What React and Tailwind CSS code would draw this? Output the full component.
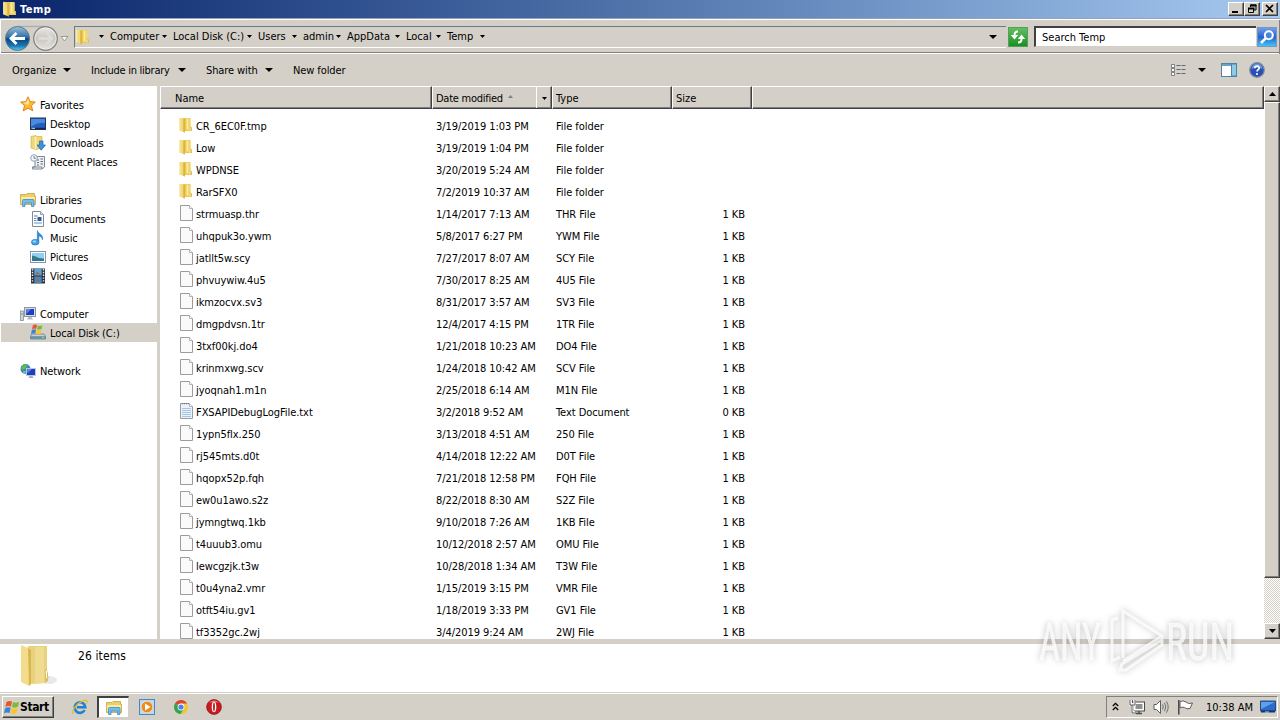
import React from 'react';

const FILES = [
  ['CR_6EC0F.tmp', '3/19/2019 1:03 PM', 'File folder', '', 'folder'],
  ['Low', '3/19/2019 1:04 PM', 'File folder', '', 'folder'],
  ['WPDNSE', '3/20/2019 5:24 AM', 'File folder', '', 'folder'],
  ['RarSFX0', '7/2/2019 10:37 AM', 'File folder', '', 'folder'],
  ['strmuasp.thr', '1/14/2017 7:13 AM', 'THR File', '1 KB', 'file'],
  ['uhqpuk3o.ywm', '5/8/2017 6:27 PM', 'YWM File', '1 KB', 'file'],
  ['jatllt5w.scy', '7/27/2017 8:07 AM', 'SCY File', '1 KB', 'file'],
  ['phvuywiw.4u5', '7/30/2017 8:25 AM', '4U5 File', '1 KB', 'file'],
  ['ikmzocvx.sv3', '8/31/2017 3:57 AM', 'SV3 File', '1 KB', 'file'],
  ['dmgpdvsn.1tr', '12/4/2017 4:15 PM', '1TR File', '1 KB', 'file'],
  ['3txf00kj.do4', '1/21/2018 10:23 AM', 'DO4 File', '1 KB', 'file'],
  ['krinmxwg.scv', '1/24/2018 10:42 AM', 'SCV File', '1 KB', 'file'],
  ['jyoqnah1.m1n', '2/25/2018 6:14 AM', 'M1N File', '1 KB', 'file'],
  ['FXSAPIDebugLogFile.txt', '3/2/2018 9:52 AM', 'Text Document', '0 KB', 'text'],
  ['1ypn5flx.250', '3/13/2018 4:51 AM', '250 File', '1 KB', 'file'],
  ['rj545mts.d0t', '4/14/2018 12:22 AM', 'D0T File', '1 KB', 'file'],
  ['hqopx52p.fqh', '7/21/2018 12:58 PM', 'FQH File', '1 KB', 'file'],
  ['ew0u1awo.s2z', '8/22/2018 8:30 AM', 'S2Z File', '1 KB', 'file'],
  ['jymngtwq.1kb', '9/10/2018 7:26 AM', '1KB File', '1 KB', 'file'],
  ['t4uuub3.omu', '10/12/2018 2:57 AM', 'OMU File', '1 KB', 'file'],
  ['lewcgzjk.t3w', '10/28/2018 1:34 AM', 'T3W File', '1 KB', 'file'],
  ['t0u4yna2.vmr', '1/15/2019 3:15 PM', 'VMR File', '1 KB', 'file'],
  ['otft54iu.gv1', '1/18/2019 3:33 PM', 'GV1 File', '1 KB', 'file'],
  ['tf3352gc.2wj', '3/4/2019 9:24 AM', '2WJ File', '1 KB', 'file'],
];

const Svg = ({ size = 16, box = '0 0 16 16', className = '', children }) => (
  <svg width={size} height={size} viewBox={box} className={`shrink-0 ${className}`}>
    {children}
  </svg>
);

const Down = ({ w = 5, className = '' }) => (
  <svg width={w} height={Math.ceil(w / 2)} viewBox="0 0 8 4" preserveAspectRatio="none" className={`shrink-0 ${className}`}>
    <path d="M0 0H8L4 4Z" fill="#000" />
  </svg>
);

const FolderIcon = ({ className }) => (
  <Svg className={className}>
    <path d="M5 1H12.5V9.5L14 11V14H5Z" fill="#ecca52" />
    <path d="M8.5 1.5H10.5V12.5H8.5Z" fill="#f9eb9f" />
    <path d="M11.5 1.5H12.5V9.5H11.5Z" fill="#f3df8a" />
    <path d="M12 9.5 14 10.5V14H12Z" fill="#e2c050" />
    <path d="M12 10.5V13.5" stroke="#fdf6cf" strokeWidth="0.8" />
    <path d="M1.3 0.8 6.8 1.6V15.6L1.3 13.4Z" fill="#f3da78" />
    <path d="M5.4 1.5 6.8 1.8V15.6L5.4 15Z" fill="#d6ab32" />
    <path d="M1.8 1.2V13.2" stroke="#fbf0bd" />
  </Svg>
);

const FileIcon = ({ text }) => (
  <Svg>
    <path d="M1.5 0.5H10.5L13.5 3.5V15.5H1.5Z" fill={text ? '#eaf3fb' : '#fafafa'} stroke="#9c9c9c" />
    <path d="M10.5 0.5V3.5H13.5" fill="#fff" stroke="#b4b4b4" />
    {text && (
      <>
        <path d="M3 5.5H12M3 7.5H12M3 9.5H12M3 11.5H12M3 13.5H12" stroke="#a5c6e2" />
        <path d="M3 0.5H11" stroke="#777" strokeWidth="1.6" strokeDasharray="1 1" />
      </>
    )}
  </Svg>
);

const StarIcon = () => (
  <Svg className="-mt-px">
    <path d="M8 0.8 10.1 5.6 15.4 6.1 11.4 9.6 12.8 14.9 8 12.1 3.2 14.9 4.6 9.6 0.6 6.1 5.9 5.6Z" fill="#fdb932" stroke="#e28420" strokeWidth="1" />
    <path d="M8 2.8 9.4 6.4 8 9 3 6.7 6.4 6.3Z" fill="#ffe99a" />
  </Svg>
);

const DesktopIcon = () => (
  <Svg>
    <rect x="0.5" y="2" width="15" height="11.5" fill="#245fc0" stroke="#26344f" />
    <path d="M1 3H15V7Q8 6 1 11Z" fill="#4a8be0" />
    <path d="M1 12.5H15" stroke="#15284c" strokeWidth="1.5" />
    <path d="M1.5 12.3H5" stroke="#b8e0ff" />
  </Svg>
);

const DownloadsIcon = () => (
  <Svg>
    <path d="M1 1.5 6 0.5 7 1.5H12V13L6 14.5 1 13Z" fill="#f0d878" stroke="#d4b252" strokeWidth="0.7" />
    <path d="M5.5 2V14" stroke="#fbf0bd" strokeWidth="1.5" />
    <path d="M9.5 6H13V10H15.5L11.2 15.2 7 10H9.5Z" fill="#3d93da" stroke="#1f64a5" strokeWidth="0.7" />
  </Svg>
);

const RecentIcon = () => (
  <Svg>
    <path d="M5 2.5H14.5V13L12 15H2.5V13H5Z" fill="#eef1f4" stroke="#7b8894" />
    <path d="M2.5 13H12V15" fill="none" stroke="#7b8894" />
    <path d="M7 6H9M7 8.5H9M7 11H9M10.5 5H13M10.5 7.5H13M10.5 10H13" stroke="#5c6b7a" strokeWidth="1.2" />
    <circle cx="4" cy="4" r="3.3" fill="#f3f7fb" stroke="#93a1b0" />
    <path d="M4 2V4.3H5.8" fill="none" stroke="#56687a" strokeWidth="0.8" />
  </Svg>
);

const LibrariesIcon = ({ size = 16 }) => (
  <Svg size={size}>
    <path d="M0.5 2.5H6L7 1.5H14.5V4H15.5V12.5H0.5Z" fill="#edcf69" stroke="#c9a43c" strokeWidth="0.8" />
    <path d="M1.2 5H14.8V11H1.2Z" fill="#faeaa3" />
    <path d="M2.5 8.5Q2.5 7.5 3.5 7.5H13Q14 7.5 14 8.5V14.5H11.5V11H5V14.5H2.5Z" fill="#73bdee" stroke="#3c8cc5" strokeWidth="0.8" />
  </Svg>
);

const DocumentsIcon = () => (
  <Svg>
    <path d="M2.5 0.5H10.5L13.5 3.5V15.5H2.5Z" fill="#fff" stroke="#7e8b99" />
    <path d="M10.5 0.5V3.5H13.5" fill="#dfe6ee" stroke="#7e8b99" strokeWidth="0.8" />
    <rect x="4" y="4" width="3.5" height="2" fill="#9db8d8" />
    <rect x="7.5" y="6" width="4" height="4" fill="#2f5b96" />
    <path d="M4 7.5H6.5M4 9.5H6.5M4 12H12" stroke="#6d8fbd" />
  </Svg>
);

const MusicIcon = () => (
  <Svg>
    <path d="M7.3 12V0.5C8 4 13.8 4 12.5 10 12.2 6.8 10 6.3 8.8 6V12.5Z" fill="#2f8edb" stroke="#1c6db5" strokeWidth="0.5" />
    <ellipse cx="5.2" cy="12.2" rx="3.8" ry="2.9" fill="#3ba0e8" stroke="#1c6db5" strokeWidth="0.5" />
    <ellipse cx="4.4" cy="11.4" rx="1.8" ry="1" fill="#a6dcfa" />
  </Svg>
);

const PicturesIcon = () => (
  <Svg>
    <rect x="0.5" y="2.5" width="15" height="11" fill="#fff" stroke="#8795a3" />
    <rect x="2" y="4" width="12" height="8" fill="#8fd0f3" />
    <path d="M2 6.5Q6 7 9 9L14 9.5V12H2Z" fill="#377b7f" />
    <path d="M2 10.5H14V12H2Z" fill="#2f72ac" />
  </Svg>
);

const VideosIcon = () => (
  <Svg>
    <rect x="1" y="0.5" width="14" height="15" fill="#2c3138" />
    <path d="M2.5 1V15M13.5 1V15" stroke="#e8eef4" strokeWidth="1.4" strokeDasharray="1.4 1.4" />
    <rect x="4.3" y="1" width="7.4" height="6.5" fill="#5ba4d8" />
    <rect x="4.3" y="8.5" width="7.4" height="6.5" fill="#4687bd" />
    <path d="M5 6.5 7 3.5 9 5 11 6.5M5 13.5 7 10.5 9 12 11 13" fill="#9e6a57" />
  </Svg>
);

const ComputerIcon = () => (
  <Svg>
    <rect x="0.5" y="5" width="3" height="9.5" fill="#cfd5da" stroke="#848d96" strokeWidth="0.8" />
    <path d="M1.2 8H2.8" stroke="#4ca04c" />
    <rect x="4.5" y="1.5" width="11" height="9" fill="#d7dbe0" stroke="#8e96a0" />
    <rect x="6" y="3" width="8" height="6" fill="#1f3ec2" />
    <path d="M6 3H11L6.5 8Z" fill="#5d83ea" />
    <path d="M8.5 11H11.5L13 13.5H7Z" fill="#b4bac1" />
  </Svg>
);

const Flag = () => (
  <>
    <path d="M2.3 2.2Q5 .6 7.4 1.9L6.4 6.6Q4 5.4 1.2 7Z" fill="#e6572a" />
    <path d="M8.3 2.3Q11 3.6 14 2.1L12.9 6.8Q10 8.2 7.4 7Z" fill="#7fb93a" />
    <path d="M1 8Q3.7 6.5 6.2 7.6L5.1 12.4Q2.6 11.4 0 12.8Z" fill="#3f82d2" />
    <path d="M7.1 8Q9.7 9.2 12.7 7.8L11.6 12.5Q8.8 13.9 6 12.7Z" fill="#f8c626" />
  </>
);

const DiskIcon = () => (
  <Svg className="-mt-px">
    <path d="M2 10H14L15.5 12V15H0.5V12Z" fill="#c9d0d6" stroke="#5f6c78" strokeWidth="0.7" />
    <rect x="1" y="12.2" width="14" height="2.6" fill="#5f93a8" />
    <rect x="12" y="12.8" width="2" height="1.3" fill="#7be07a" />
    <g transform="translate(1 -0.5) scale(.82)"><Flag /></g>
  </Svg>
);

const NetworkIcon = () => (
  <Svg>
    <circle cx="5.5" cy="6" r="5" fill="#3285cd" />
    <path d="M2 3Q5 0 8 2L6 5 3 7 1 6Z" fill="#67b84c" />
    <path d="M3 8 6 8 5 11 3 10Z" fill="#7ec864" />
    <rect x="6.5" y="5.5" width="9" height="7" fill="#1d3fc4" stroke="#bfc6cf" />
    <path d="M7 6H12L7.5 10.5Z" fill="#5d83ea" />
    <path d="M9.5 13H12.5L13.5 15H8.5Z" fill="#a8afb7" />
  </Svg>
);

const SIDEBAR = [
  ['Favorites', StarIcon, 0],
  ['Desktop', DesktopIcon, 1],
  ['Downloads', DownloadsIcon, 1],
  ['Recent Places', RecentIcon, 1],
  null,
  ['Libraries', LibrariesIcon, 0],
  ['Documents', DocumentsIcon, 1],
  ['Music', MusicIcon, 1],
  ['Pictures', PicturesIcon, 1],
  ['Videos', VideosIcon, 1],
  null,
  ['Computer', ComputerIcon, 0],
  ['Local Disk (C:)', DiskIcon, 1],
  null,
  ['Network', NetworkIcon, 0],
];

const CRUMBS = [
  ['Computer', 'w-[63px]'],
  ['Local Disk (C:)', 'w-[85px]'],
  ['Users', 'w-[45px]'],
  ['admin', 'w-[44px]'],
  ['AppData', 'w-[59px]'],
  ['Local', 'w-[41px]'],
  ['Temp', 'w-[44px]'],
];

const RAISED = 'bg-[#d4d0c8] border border-t-white border-l-white border-r-[#404040] border-b-[#404040] shadow-[inset_-1px_-1px_0_#808080]';

const WinButton = ({ children, className = '' }) => (
  <div className={`w-4 h-[14px] flex items-center justify-center ${RAISED} ${className}`}>
    <svg width="12" height="10" viewBox="0 0 12 10">{children}</svg>
  </div>
);

const TitleBar = () => (
  <div className="h-[18px] flex items-center pl-[2px] pr-[2px] bg-linear-to-r from-[#0a246a] to-[#a6caf0]">
    <FolderIcon />
    <span className="flex-1 pl-[2px] pt-px text-white font-bold tracking-[0.5px]">Temp</span>
    <WinButton><path d="M2 8H8" stroke="#000" strokeWidth="2" /></WinButton>
    <WinButton>
      <path d="M4.5 3V1H10V6H8" fill="none" stroke="#000" />
      <path d="M4 1.5H10.5M2 4.5H8.5" stroke="#000" strokeWidth="2" />
      <path d="M2.5 4V8.5H7.5V4" fill="none" stroke="#000" />
    </WinButton>
    <WinButton className="ml-[2px]"><path d="M2 1 9 8M9 1 2 8" stroke="#000" strokeWidth="1.7" /></WinButton>
  </div>
);

const NavButtons = () => (
  <svg width="70" height="30" viewBox="0 0 70 30" className="shrink-0">
    <defs>
      <linearGradient id="back" x1="0" y1="0" x2="0" y2="1">
        <stop offset="0" stopColor="#9cc0d8" />
        <stop offset="0.45" stopColor="#2f70a6" />
        <stop offset="0.52" stopColor="#0b4480" />
        <stop offset="0.8" stopColor="#1878b4" />
        <stop offset="1" stopColor="#4fd0f4" />
      </linearGradient>
      <linearGradient id="fwd" x1="0" y1="0" x2="0" y2="1">
        <stop offset="0" stopColor="#eceae6" />
        <stop offset="0.5" stopColor="#c9c6c1" />
        <stop offset="1" stopColor="#e6e4e0" />
      </linearGradient>
    </defs>
    <path d="M17 4.5H45" stroke="#a9b0b4" strokeWidth="1.5" />
    <circle cx="17.5" cy="16.5" r="12" fill="url(#back)" stroke="#5a7890" />
    <path d="M25 16.5H12M16.5 11 11 16.5 16.5 22" fill="none" stroke="#fff" strokeWidth="2.8" />
    <circle cx="45.5" cy="16.5" r="11.8" fill="url(#fwd)" stroke="#85868a" strokeWidth="1.4" />
    <circle cx="45.5" cy="16.5" r="10.6" fill="none" stroke="#f0efed" strokeWidth="0.8" />
    <path d="M38.5 16.5H51M46.5 11 52 16.5 46.5 22" fill="none" stroke="#dfddd9" strokeWidth="2.4" />
    <path d="M61 14.5H68L64.5 19Z" fill="#f4f3f1" stroke="#8b8984" strokeWidth="0.8" />
  </svg>
);

const AddressBar = () => (
  <div className="h-[36px] flex items-center border-t border-[#9aa0b8] bg-[#d4d0c8] shadow-[inset_0_1px_0_#fff,inset_1px_0_0_#fff,inset_-1px_0_0_#808080,inset_0_-1px_0_#fff,inset_0_-2px_0_#808080]">
    <NavButtons />
    <div className="ml-1 w-[932px] h-[22px] flex items-center border-t border-l border-[#6b7b86] border-b border-b-white">
      <FolderIcon />
      <Down className="ml-[8px]" />
      <div className="flex-1 flex pl-[6px]">
        {CRUMBS.map(([name, width]) => (
          <div key={name} className={`flex items-center ${width}`}>
            <span className="flex-1 w-0">{name}</span>
            <Down className="mr-[6px]" />
          </div>
        ))}
      </div>
      <Down w={8} className="mr-[9px]" />
    </div>
    <div className="ml-[2px] w-5 h-5 flex items-center justify-center bg-linear-to-b from-[#5fbf5c] to-[#139023] border border-[#5b9b5e]">
      <Svg size={18} box="0 0 18 18">
        <path d="M9 3.5Q5.5 3.5 5.5 7V8" fill="none" stroke="#fff" strokeWidth="2" />
        <path d="M1.8 7H9.2L5.5 11.5Z" fill="#fff" />
        <path d="M9 14.5Q12.5 14.5 12.5 11V10" fill="none" stroke="#fff" strokeWidth="2" />
        <path d="M8.8 11H16.2L12.5 6.5Z" fill="#fff" />
      </Svg>
    </div>
    <div className="ml-[6px] w-[222px] h-[21px] pl-[6px] pt-[2px] flex items-center bg-white border-t-2 border-l-2 border-[#404040] border-b border-b-[#d4d0c8]">
      Search Temp
    </div>
    <div className="ml-px w-5 h-5 flex items-center justify-center bg-linear-to-b from-[#6f9ee8] via-[#2562cf] to-[#45c3f2] border border-[#7795cb]">
      <Svg>
        <circle cx="9.8" cy="6.2" r="4" fill="#4a86dd" stroke="#fff" strokeWidth="2" />
        <path d="M6.8 9.2 2 14" stroke="#fff" strokeWidth="2.6" />
      </Svg>
    </div>
  </div>
);

const CommandBar = () => (
  <div className="h-8 flex items-center pl-3 pr-[15px]">
    <div className="w-[79px] flex items-center"><span className="w-[51px] pt-[2px]">Organize</span><Down w={8} /></div>
    <div className="w-[115px] flex items-center"><span className="w-[87px] pt-[2px] tracking-[-0.25px]">Include in library</span><Down w={8} /></div>
    <div className="w-[87px] flex items-center"><span className="w-[59px] pt-[2px] tracking-[-0.1px]">Share with</span><Down w={8} /></div>
    <span className="flex-1 pt-[2px] tracking-[-0.1px]">New folder</span>
    <Svg>
      <path d="M1.5 2.5h3v3h-3zM1.5 6.5h3v3h-3zM1.5 10.5h3v3h-3z" fill="#fff" stroke="#6f737c" strokeWidth="0.9" />
      <path d="M6.5 3.5H15.5M6.5 7.5H15.5M6.5 11.5H15.5" stroke="#5f6675" strokeDasharray="4 1" />
    </Svg>
    <Down w={8} className="ml-[12px]" />
    <Svg className="ml-[15px]">
      <rect x="0.5" y="1.5" width="15" height="13" fill="#fff" stroke="#4f81a9" />
      <path d="M1 3H10" stroke="#6ba0c9" strokeWidth="2" />
      <rect x="10.5" y="2" width="5" height="12" fill="#8ccbe9" stroke="#4f81a9" />
    </Svg>
    <Svg className="ml-[12px]">
      <circle cx="8" cy="8" r="7.3" fill="#2a50b6" stroke="#858da0" strokeWidth="1.2" />
      <path d="M2.5 7A5.5 5.5 0 0 1 13.5 7Q8 4.5 2.5 7Z" fill="#6e92de" />
      <path d="M5.8 6.2C5.8 3.3 10.4 3.4 10.2 6.1 10.1 7.7 8 7.7 8 9.6" fill="none" stroke="#fff" strokeWidth="1.7" />
      <circle cx="8" cy="12" r="1.1" fill="#fff" />
    </Svg>
  </div>
);

const Sidebar = () => (
  <div className="w-[157px] pt-[9px] bg-white">
    {SIDEBAR.map((item, i) => {
      if (!item) return <div key={i} className="h-[19px]" />;
      const [label, Icon, level] = item;
      return (
        <div
          key={label}
          className={`h-[19px] ml-px flex items-center gap-1 ${level ? 'pl-[29px]' : 'pl-[19px]'} ${label === 'Local Disk (C:)' ? 'bg-[#d4d0c8]' : ''}`}
        >
          <Icon />
          <span className="pt-[2px] tracking-[-0.1px]">{label}</span>
        </div>
      );
    })}
  </div>
);

const HEAD = 'h-[23px] pt-[2px] flex items-center border-t border-l border-white border-r border-r-[#404040] border-b border-b-[#404040] shadow-[inset_-1px_-1px_0_#808080]';

const ColumnHeader = () => (
  <div className="flex bg-[#d4d0c8]">
    <div className={`w-[272px] pl-[14px] ${HEAD}`}>Name</div>
    <div className={`w-[120px] pl-[3px] ${HEAD}`}>
      <span className="tracking-[-0.25px]">Date modified</span>
      <svg width="5" height="3" viewBox="0 0 5 3" className="ml-[5px] -mt-[4px]"><path d="M0 3 2.5 0 5 3Z" fill="#808080" /></svg>
      <div className="ml-auto -mt-[2px] w-[15px] h-[21px] flex items-center justify-center pt-[2px] border-l border-white"><Down /></div>
    </div>
    <div className={`w-[120px] pl-[3px] ${HEAD}`}>Type</div>
    <div className={`w-20 pl-[3px] ${HEAD}`}>Size</div>
    <div className={`flex-1 ${HEAD}`} />
  </div>
);

const FileList = () => (
  <div className="flex-1 flex flex-col bg-white overflow-hidden">
    <ColumnHeader />
    <div className="pt-[6px] pl-[18px] tracking-[-0.06px]">
      {FILES.map(([name, date, type, size, kind]) => (
        <div key={name} className="h-[22px] pt-[2px] flex items-center">
          <div className="w-[258px] h-4 flex items-center gap-[2px]">
            <span className={kind === 'folder' ? 'pb-[4px]' : 'pb-[4px] pl-px -mr-px'}>
              {kind === 'folder' ? <FolderIcon /> : <FileIcon text={kind === 'text'} />}
            </span>
            <span>{name}</span>
          </div>
          <span className="w-[120px]">{date}</span>
          <span className="w-[120px]">{type}</span>
          <span className="w-[69px] text-right">{size}</span>
        </div>
      ))}
    </div>
  </div>
);

const Scrollbar = () => (
  <div className="w-4 flex flex-col bg-[repeating-conic-gradient(#fff_0_25%,#d4d0c8_0_50%)] bg-size-[2px_2px]">
    <div className={`h-4 flex items-center justify-center ${RAISED}`}>
      <svg width="7" height="4" viewBox="0 0 7 4"><path d="M0 4 3.5 0 7 4Z" /></svg>
    </div>
    <div className={`h-[476px] ${RAISED}`} />
    <div className={`mt-auto h-4 flex items-center justify-center ${RAISED}`}><Down w={7} /></div>
  </div>
);

const StartButton = () => (
  <div className={`w-[52px] h-[22px] pl-px flex items-center font-bold text-[12px] tracking-[-0.4px] ${RAISED}`}>
    <Svg><g transform="translate(0 0.5) scale(1.08)"><Flag /></g></Svg>
    <span>Start</span>
  </div>
);

const IeIcon = () => (
  <Svg>
    <path d="M12.6 11.2A5.3 5.3 0 1 1 13.3 8.3H5" fill="none" stroke="#2181d0" strokeWidth="2.6" />
    <path d="M1.3 14.8C-1 12 5 4 11 1.8 15 .2 16 1.8 14.3 4.5" fill="none" stroke="#e9b92d" strokeWidth="1.3" />
  </Svg>
);

const PlayerIcon = () => (
  <Svg>
    <rect x="0.5" y="0.5" width="15" height="15" fill="#b8daf4" stroke="#4589c4" />
    <circle cx="8" cy="8" r="5.8" fill="#f08a1c" stroke="#fbe0bd" strokeWidth="0.7" />
    <path d="M6 4.5 11.5 8 6 11.5Z" fill="#fff" />
  </Svg>
);

const ChromeIcon = () => (
  <Svg>
    <circle cx="8" cy="8" r="7" fill="#f5c52c" />
    <path d="M8 8 1.9 4.6A7 7 0 0 1 14.1 4.6H8Z" fill="#dc4435" />
    <path d="M1.9 4.6A7 7 0 0 0 7.6 15L10.8 9.6 8 8Z" fill="#34a353" />
    <circle cx="8" cy="8" r="3.4" fill="#fff" />
    <circle cx="8" cy="8" r="2.6" fill="#4584ea" />
  </Svg>
);

const OperaIcon = () => (
  <Svg>
    <circle cx="8" cy="8" r="7.4" fill="#c81a1f" stroke="#8c1014" strokeWidth="0.7" />
    <path d="M3 4A6.4 6.4 0 0 1 13 4Q8 2 3 4Z" fill="#ec7775" />
    <ellipse cx="8" cy="8" rx="2.3" ry="5.2" fill="#fff" />
    <ellipse cx="8" cy="8" rx="0.9" ry="4.4" fill="#b6151a" />
  </Svg>
);

const Tray = () => (
  <div className="w-[172px] h-[22px] mr-[2px] flex items-center border-t border-l border-[#808080] border-b border-b-white border-r border-r-white">
    <svg width="7" height="9" viewBox="0 0 7 9" className="ml-[5px] -mt-[2px]">
      <path d="M0.8 4 3.5 1.3 6.2 4M0.8 8 3.5 5.3 6.2 8" fill="none" stroke="#000" strokeWidth="1.3" />
    </svg>
    <Svg className="ml-[10px]">
      <rect x="4.5" y="3" width="11" height="9" fill="#fff" stroke="#4a4a4a" />
      <rect x="6.5" y="5" width="7" height="5" fill="#8f8f8f" />
      <path d="M7 14.5H13M10 12V14" stroke="#4a4a4a" strokeWidth="1.5" />
      <path d="M1.5 1V5.5H5.5V1M3.5 5.5V13.5H6" fill="none" stroke="#fff" strokeWidth="2.4" />
      <path d="M1 1V6H6V1M3.5 1V4M3 6V14H7" fill="none" stroke="#4a4a4a" strokeWidth="0.9" />
    </Svg>
    <Svg className="ml-2">
      <path d="M1 5.5H3.5L7.5 1.5V14.5L3.5 10.5H1Z" fill="#fff" stroke="#5e5e5e" />
      <path d="M9.5 5.5Q11 8 9.5 10.5M11.5 3.8Q14 8 11.5 12.2M13.4 2.3Q17 8 13.4 13.7" fill="none" stroke="#6f6f6f" />
    </Svg>
    <Svg className="ml-2">
      <path d="M3 2.5Q6 1 9 3 11 5.5 15.5 4L13 9.5Q9.5 10.5 7.5 8.5 5 7.5 3 9Z" fill="#fff" stroke="#5e5e5e" />
      <path d="M1.8 1V15.5" stroke="#4f4f4f" strokeWidth="1.6" />
    </Svg>
    <span className="flex-1 pl-[13px] pt-[2px]">10:38 AM</span>
    <Svg className="mr-px">
      <path d="M0.5 2H15.5V12H0.5Z" fill="#2b6ccd" stroke="#284b83" />
      <path d="M1 3H15L1 10Z" fill="#5fa0ea" />
      <path d="M1 12.5H15" stroke="#173763" strokeWidth="2" />
      <path d="M5 13H9" stroke="#a6d8ff" />
    </Svg>
  </div>
);

const Taskbar = () => (
  <div className="h-7 pt-px flex items-center bg-[#d4d0c8] border-t border-[#d4d0c8] shadow-[inset_0_1px_0_#fff]">
    <div className="pl-[2px]"><StartButton /></div>
    <div className="ml-[18px]"><IeIcon /></div>
    <div className="ml-[9px] w-8 h-[22px] flex items-center justify-center bg-white border-t-2 border-l-2 border-[#404040] border-b border-r border-b-[#d4d0c8] border-r-[#d4d0c8]">
      <LibrariesIcon />
    </div>
    <div className="ml-[10px]"><PlayerIcon /></div>
    <div className="ml-[18px]"><ChromeIcon /></div>
    <div className="ml-[17px] flex-1"><OperaIcon /></div>
    <Tray />
  </div>
);

const Watermark = () => (
  <svg width="240" height="84" viewBox="0 0 240 84" className="absolute left-[1030px] top-[600px] drop-shadow-[0_0_3px_rgba(0,0,0,0.32)]">
    <g fill="#fff" fillOpacity="0.75" stroke="#fff" strokeOpacity="0.5" strokeWidth="0.8" fontFamily="Roboto, sans-serif" fontSize="52">
      <text x="9" y="60" textLength="62" lengthAdjust="spacingAndGlyphs">ANY</text>
      <text x="136" y="60" textLength="68" lengthAdjust="spacingAndGlyphs">RUN</text>
    </g>
    <g fill="none" stroke="#fff" strokeOpacity="0.75" strokeWidth="3">
      <path d="M93 58V11L132 36 93 61" />
      <path d="M88 18 82 20V61L90 57" />
      <path d="M92 64 90 70 96 70 132 45V40Z" />
    </g>
  </svg>
);

export default function App() {
  return (
    <div className="relative w-[1280px] h-[720px] flex flex-col overflow-hidden bg-[#d4d0c8] text-black text-[11px] leading-[14px] font-['DejaVu_Sans_Condensed','DejaVu_Sans',sans-serif] font-stretch-condensed whitespace-nowrap">
      <TitleBar />
      <AddressBar />
      <CommandBar />
      <div className="h-[553px] flex">
        <Sidebar />
        <div className="w-[3px] bg-[#d4d0c8]" />
        <FileList />
        <Scrollbar />
      </div>
      <div className="h-[5px]" />
      <div className="h-12 pl-4 flex items-start bg-white">
        <svg width="44" height="44" viewBox="0 0 44 44">
          <ellipse cx="33" cy="36" rx="8" ry="4" fill="#e9e9e9" />
          <path d="M12 2H31V30L33 34 29 39 13 40Z" fill="#e9d27c" />
          <path d="M19 3H28V39L19 40Z" fill="#f0dc90" />
          <path d="M30 24 32 29V37L29 39V30Z" fill="#dbbf60" />
          <path d="M30.5 27V34" stroke="#fff" />
          <path d="M5 1 15 5V40L13 42 5 38Z" fill="#f3dd8d" />
          <path d="M12 4 15 6V40L13 42Z" fill="#d7b650" />
        </svg>
        <span className="pl-[18px] pt-[5px] text-[12px] tracking-[0.1px]">26 items</span>
      </div>
      <Taskbar />
      <Watermark />
    </div>
  );
}
